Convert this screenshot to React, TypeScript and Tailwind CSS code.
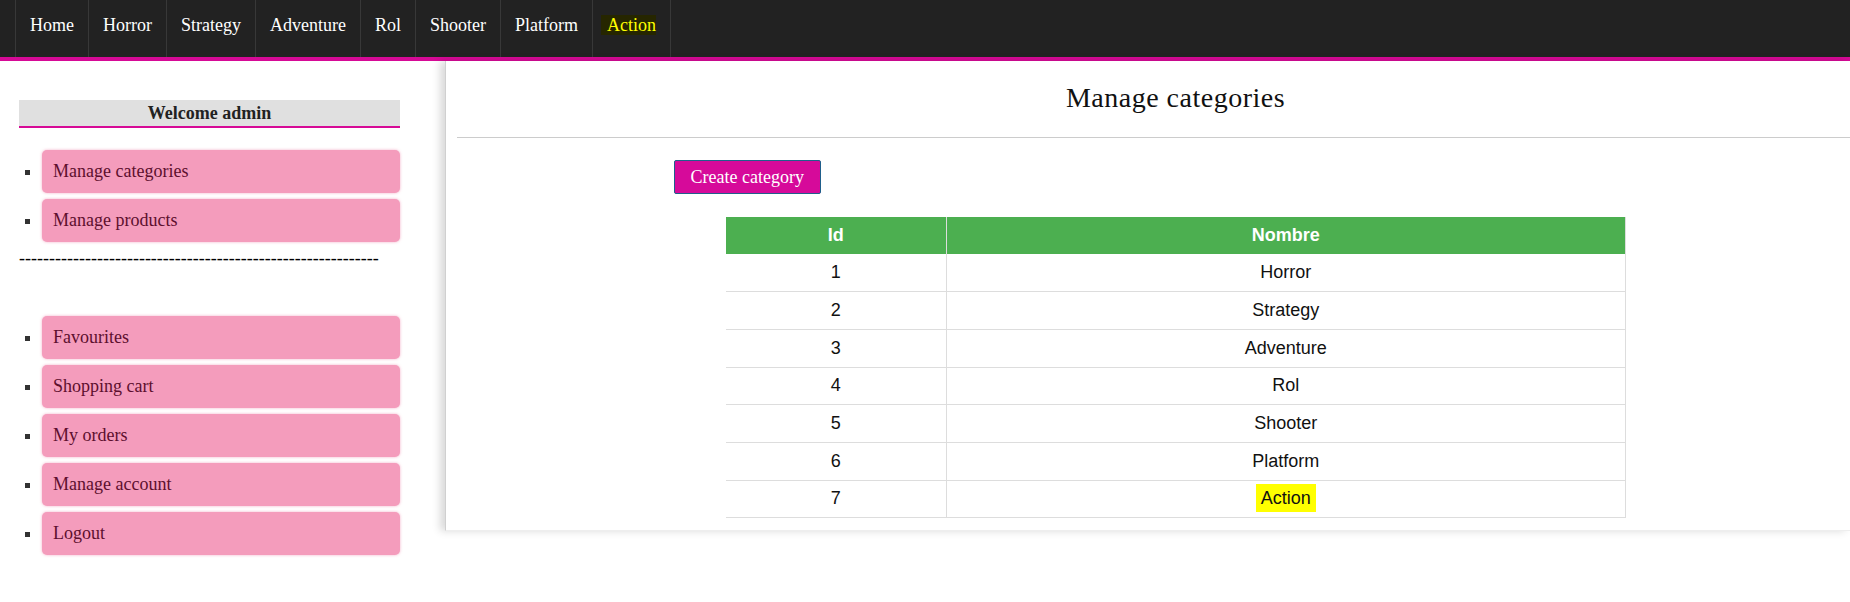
const navItems = ["Home", "Horror", "Strategy", "Adventure", "Rol", "Shooter", "Platform"];

const adminLinks = ["Manage categories", "Manage products"];
const userLinks = ["Favourites", "Shopping cart", "My orders", "Manage account", "Logout"];

const categories = [
  { id: 1, name: "Horror" },
  { id: 2, name: "Strategy" },
  { id: 3, name: "Adventure" },
  { id: 4, name: "Rol" },
  { id: 5, name: "Shooter" },
  { id: 6, name: "Platform" },
  { id: 7, name: "Action" },
];

const SideLink = ({ label }: { label: string }) => (
  <li className="mb-[6px] marker:text-[#333]">
    <a className="block h-[43px] rounded-[5px] bg-[#f49cbc] px-[11px] py-[11px] leading-[21px] text-[#5d0f2e] shadow-[0_0_3px_rgba(240,140,175,0.7)]">
      {label}
    </a>
  </li>
);

const App = () => {
  return (
    <div className="min-h-[602px] bg-white font-['Liberation_Serif',serif] text-[18px]">
      {/* top nav */}
      <nav className="h-[57px] bg-[#222] border-b-4 border-[#d60a96] box-content">
        <ul className="flex h-full ml-[15px]">
          {navItems.map((item) => (
            <li
              key={item}
              className="h-[57px] border-l border-[#383838] px-[14px] pt-[15px] leading-[20px] text-white"
            >
              {item}
            </li>
          ))}
          <li className="h-[57px] border-x border-[#383838] px-[14px] pt-[15px] leading-[20px]">
            <span className="-ml-[6px] inline-block bg-[#262600] pl-[6px] text-[#ffff00]">Action</span>
          </li>
        </ul>
      </nav>

      <div className="flex items-start">
        {/* sidebar */}
        <aside className="w-[445px] shrink-0 pl-[19px] pr-[45px] pt-[39px]">
          <div className="h-[26px] border-b-2 border-[#d60a96] bg-[#e0e0e0] box-content text-center font-bold leading-[26px] text-[#222]">
            Welcome admin
          </div>
          <ul className="mt-[22px] list-[square] pl-[23px]">
            {adminLinks.map((l) => (
              <SideLink key={l} label={l} />
            ))}
          </ul>
          <p className="leading-[21px] text-black">
            {"------------------------------------------------------------"}
          </p>
          <ul className="mt-[47px] list-[square] pl-[23px]">
            {userLinks.map((l) => (
              <SideLink key={l} label={l} />
            ))}
          </ul>
        </aside>

        {/* main panel */}
        <main className="flex-1 border-l border-b border-l-[#d0d0d0] border-b-[#eee] bg-white pb-[12px] shadow-[-5px_0_8px_rgba(0,0,0,0.15)]">
          <div className="pl-[55px] pt-[21px]">
            <h1 className="text-center text-[28px] leading-[31px] tracking-[0.5px] text-[#111]">
              Manage categories
            </h1>
          </div>
          <hr className="ml-[11px] mt-[24px] border-t border-[#ccc]" />
          <div className="pl-[55px]">
            <div className="mx-auto mt-[22px] w-[1004px]">
              <button className="h-[34px] rounded-[2px] border border-[#1f5f8b] bg-[#d60a9a] px-[16px] leading-[20px] text-white">
                Create category
              </button>
            </div>
            <table className="mx-auto mt-[23px] w-[900px] table-fixed border-collapse font-['Liberation_Sans',Arial,sans-serif] text-[18px]">
              <colgroup>
                <col className="w-[221px]" />
                <col />
              </colgroup>
              <thead>
                <tr className="h-[37px] bg-[#4caf50] text-white">
                  <th className="border-r border-[#ddd] font-bold">Id</th>
                  <th className="border-r border-[#ddd] font-bold">Nombre</th>
                </tr>
              </thead>
              <tbody>
                {categories.map((c) => (
                  <tr key={c.id} className="h-[37.7px] text-[#111]">
                    <td className="border-r border-b border-[#ddd] text-center">{c.id}</td>
                    <td className="border-r border-b border-[#ddd] text-center">
                      {c.name === "Action" ? (
                        <span className="bg-[#ffff00] px-[5px] py-[4px]">{c.name}</span>
                      ) : (
                        c.name
                      )}
                    </td>
                  </tr>
                ))}
              </tbody>
            </table>
          </div>
        </main>
      </div>
    </div>
  );
};

export default App;
